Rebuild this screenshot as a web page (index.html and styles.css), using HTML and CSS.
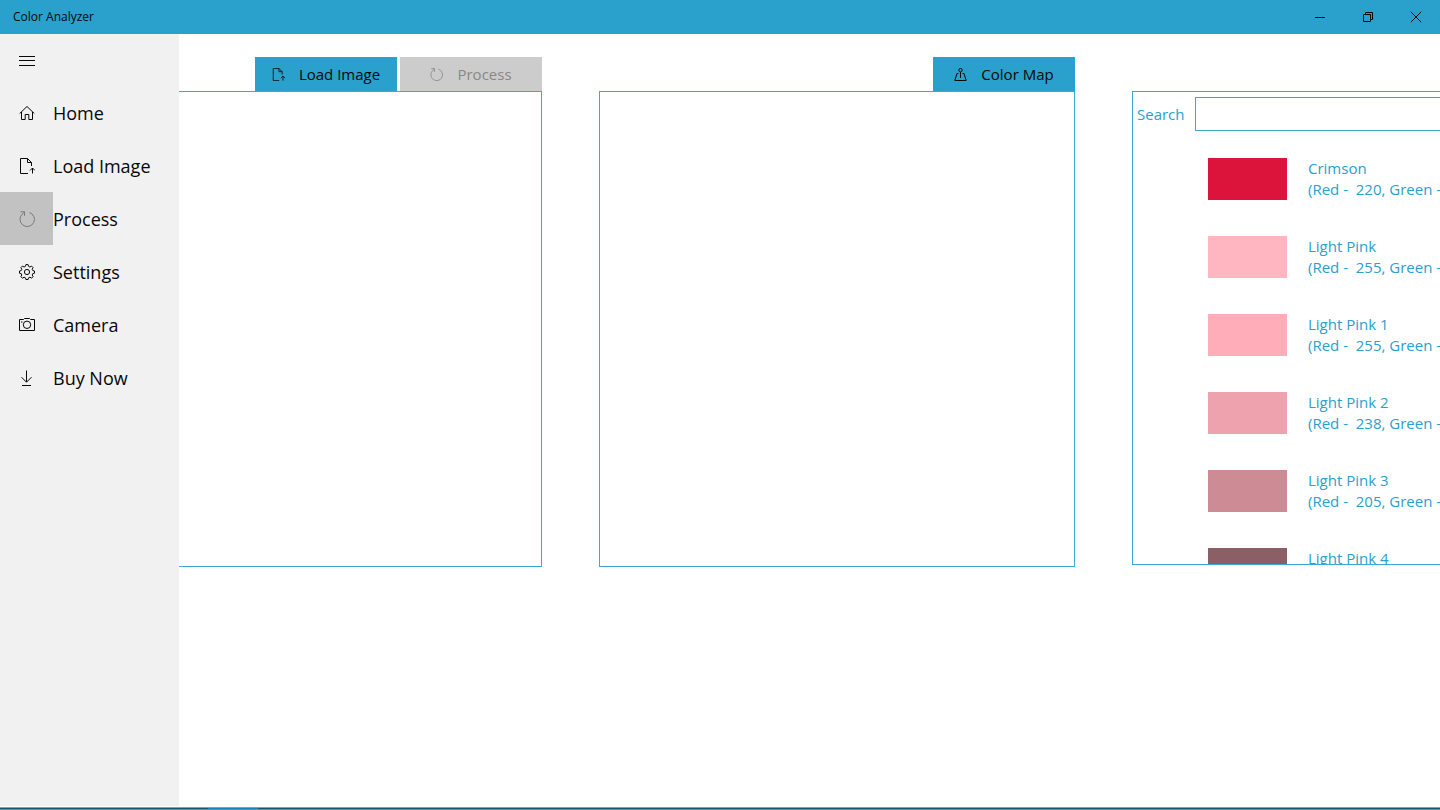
FILE: index.html
```html
<!DOCTYPE html>
<html lang="en">
<head>
  <meta charset="UTF-8">
  <title>Color Analyzer</title>
  <link rel="stylesheet" href="styles.css">
</head>
<body>

  <!-- Shared icons -->
  <svg class="sprite" aria-hidden="true">
    <symbol id="icon-load" viewBox="0 0 16 16">
      <path d="M9 15.500H1.500V.5h7l4 4V8M8.500 .5v4h4M13.500 15.500V10M11 12.500l2.500-2.500 2.500 2.500"/>
    </symbol>
    <symbol id="icon-process" viewBox="0 0 16 16">
      <path d="M10.500 1.500A7.200 7.200 0 1 1 3.200 3.200L5.500 1M1.500 .8h4v4"/>
    </symbol>
  </svg>

  <!-- Title Bar -->
  <header class="title-bar">
    <h1>Color Analyzer</h1>
    <div class="window-buttons">
      <button type="button" aria-label="Minimize">
        <svg viewBox="0 0 12 12"><path d="M1 6.500h10"/></svg>
      </button>
      <button type="button" aria-label="Restore">
        <svg viewBox="0 0 12 12"><path d="M1.500 3.500h7v7h-7zM3.500 3.500v-2h7v7h-2"/></svg>
      </button>
      <button type="button" aria-label="Close">
        <svg viewBox="0 0 12 12"><path d="M.8 .8l10.400 10.400M11.200 .8L.8 11.200"/></svg>
      </button>
    </div>
  </header>

  <div class="app">
    <!-- Side Menu -->
    <nav class="side-menu">
      <button type="button" class="menu-toggle" aria-label="Menu">
        <span class="icon"><svg viewBox="0 0 16 16"><path d="M0 4.500h16M0 8.500h16M0 13.500h16"/></svg></span>
      </button>
      <button type="button">
        <span class="icon"><svg viewBox="0 0 16 16"><path d="M.7 8.500L8 1.500l7.300 7M2.500 7v7.500h3.700V9.500h3.600v5h3.700V7"/></svg></span>
        Home
      </button>
      <button type="button">
        <span class="icon"><svg><use href="#icon-load"/></svg></span>
        Load Image
      </button>
      <button type="button" disabled>
        <span class="icon"><svg><use href="#icon-process"/></svg></span>
        Process
      </button>
      <button type="button">
        <span class="icon"><svg viewBox="0 0 16 16"><path d="M6.400 2.400L6.900.6h2.200l.5 1.800 1.300.6 1.700-.9 1.500 1.500-.9 1.700.5 1.200 1.800.5v2.200l-1.800.5-.5 1.300.9 1.600-1.500 1.600-1.700-1-1.300.6-.5 1.700H6.900l-.5-1.700-1.300-.6-1.700 1-1.500-1.600.9-1.600-.5-1.300L.5 9.200V7l1.800-.5.5-1.200-.9-1.700 1.500-1.500 1.700.9z"/><circle cx="8" cy="8" r="2.600"/></svg></span>
        Settings
      </button>
      <button type="button">
        <span class="icon"><svg viewBox="0 0 16 16"><path d="M.5 2.500h4l1-1h5l1 1h4v11H.5zM2 5h1.500"/><circle cx="8" cy="7.800" r="3.700"/></svg></span>
        Camera
      </button>
      <button type="button">
        <span class="icon"><svg viewBox="0 0 16 16"><path d="M7.500 .5v11.500M2.500 7.200l5 5 5-5M3 15.500h9"/></svg></span>
        Buy Now
      </button>
    </nav>

    <!-- Main Content -->
    <main class="content">
      <section class="panel">
        <div class="toolbar">
          <button type="button">
            <svg><use href="#icon-load"/></svg>
            Load Image
          </button>
          <button type="button" disabled>
            <svg><use href="#icon-process"/></svg>
            Process
          </button>
        </div>
        <div class="canvas"></div>
      </section>

      <section class="panel">
        <div class="toolbar">
          <button type="button">
            <svg viewBox="0 0 13 13"><circle cx="6.500" cy="2.200" r="1.700"/><path d="M6.500 4v6M4.500 5.500h-1.500L.8 12.500h11.400L10 5.500H8.500"/></svg>
            Color Map
          </button>
        </div>
        <div class="canvas"></div>
      </section>

      <section class="panel">
        <div class="toolbar"></div>
        <div class="color-list">
          <div class="search">
            <label for="search">Search</label>
            <input type="text" id="search">
          </div>
          <ul>
            <li><span class="swatch crimson"></span><p>Crimson
(Red -  220, Green -  20, Blue -  60)</p></li>
            <li><span class="swatch light-pink"></span><p>Light Pink
(Red -  255, Green -  182, Blue -  193)</p></li>
            <li><span class="swatch light-pink-1"></span><p>Light Pink 1
(Red -  255, Green -  174, Blue -  185)</p></li>
            <li><span class="swatch light-pink-2"></span><p>Light Pink 2
(Red -  238, Green -  162, Blue -  173)</p></li>
            <li><span class="swatch light-pink-3"></span><p>Light Pink 3
(Red -  205, Green -  140, Blue -  149)</p></li>
            <li><span class="swatch light-pink-4"></span><p>Light Pink 4
(Red -  139, Green -  95, Blue -  101)</p></li>
          </ul>
        </div>
      </section>
    </main>
  </div>

  <!-- Taskbar edge -->
  <footer class="taskbar"><div class="active-app"></div></footer>

</body>
</html>
```
FILE: styles.css
```css
* {
  box-sizing: border-box;
  margin: 0;
  padding: 0;
}

body {
  display: flex;
  flex-direction: column;
  height: 100vh;
  overflow: hidden;
  background: white;
  color: #080808;
  font-family: "Open Sans", "Noto Sans", sans-serif;
}

button {
  border: none;
  background: none;
  color: inherit;
  font-family: inherit;
}

svg {
  width: 16px;
  height: 16px;
  fill: none;
  stroke: currentColor;
}

.sprite {
  display: none;
}

.title-bar {
  display: flex;
  justify-content: space-between;
  flex-shrink: 0;
  height: 34px;
  padding-left: 13px;
  background: #2aa0cd;
}

.title-bar h1 {
  font-size: 12px;
  font-weight: normal;
  line-height: 34px;
}

.window-buttons {
  display: flex;
}

.window-buttons button {
  display: flex;
  align-items: center;
  justify-content: center;
  width: 48px;
}

.window-buttons svg {
  width: 12px;
  height: 12px;
}

.app {
  position: relative;
  flex: 1;
  min-height: 0;
  margin-bottom: 1px;
}

.side-menu {
  position: absolute;
  top: 0;
  bottom: 0;
  left: 0;
  width: 179px;
  background: #f1f1f1;
}

.side-menu button {
  display: flex;
  align-items: center;
  width: 100%;
  height: 53px;
  font-size: 18px;
  white-space: nowrap;
}

.side-menu .menu-toggle {
  height: 52px;
}

.side-menu .icon {
  display: flex;
  align-items: center;
  justify-content: center;
  width: 53px;
  height: 100%;
}

.side-menu button:disabled {
  color: #080808;
}

.side-menu button:disabled .icon {
  background: #c2c2c2;
  color: #7a7a7a;
}

.content {
  display: flex;
  gap: 57px;
  height: 100%;
  padding: 23px 0 0 66px;
  overflow: hidden;
}

.panel {
  flex: 0 0 476px;
}

.toolbar {
  display: flex;
  justify-content: flex-end;
  gap: 3px;
  height: 34px;
}

.toolbar button {
  display: flex;
  align-items: center;
  justify-content: center;
  gap: 14px;
  width: 142px;
  background: #2aa0cd;
  font-size: 15px;
}

.toolbar svg {
  width: 13px;
  height: 13px;
}

.toolbar button:disabled {
  background: #ccc;
  color: #888;
}

.canvas {
  height: 476px;
  border: 1px solid #3ba9d2;
}

.color-list {
  height: 474px;
  border: 1px solid #3ba9d2;
  overflow: hidden;
  color: #2aa0cd;
  font-size: 15px;
}

.search {
  display: flex;
  align-items: center;
  gap: 10px;
  padding: 5px 4px;
}

.search input {
  flex: 1;
  height: 34px;
  padding: 0 8px;
  border: 1px solid #3ba9d2;
  color: inherit;
  font: inherit;
}

.color-list ul {
  display: flex;
  flex-direction: column;
  gap: 36px;
  padding: 22px 0 0 75px;
  list-style: none;
}

.color-list li {
  display: flex;
  gap: 21px;
}

.color-list p {
  line-height: 21px;
  white-space: pre;
}

.swatch {
  flex-shrink: 0;
  width: 79px;
  height: 42px;
}

.crimson { background: #dc143c; }
.light-pink { background: #ffb6c1; }
.light-pink-1 { background: #ffaeb9; }
.light-pink-2 { background: #eea2ad; }
.light-pink-3 { background: #cd8c95; }
.light-pink-4 { background: #8b5f65; }

.taskbar {
  flex-shrink: 0;
  height: 3px;
  padding-left: 208px;
  border-top: 1px solid #7fa3b0;
  border-bottom: 1px solid #5f8fa3;
  background: #17566f;
}

.active-app {
  width: 50px;
  height: 1px;
  background: #1883b4;
}
```
